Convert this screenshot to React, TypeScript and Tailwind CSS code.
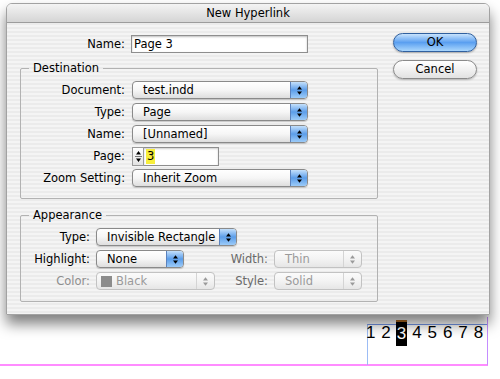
import React from "react";

function Arrows({ color = "#000" }: { color?: string }) {
  return (
    <svg width="7" height="11" viewBox="0 0 7 11">
      <path d="M3.5 1.2 L6 4.4 L1 4.4 Z M3.5 9.8 L6 6.6 L1 6.6 Z" fill={color} />
    </svg>
  );
}

function AquaSelect({ w, text }: { w: string; text: string }) {
  return (
    <div
      className={`flex h-[18px] items-stretch overflow-hidden rounded-[4px] border border-[#8a8a8a] bg-gradient-to-b from-white via-[#f6f6f6] to-[#dedede] shadow-[0_1px_1px_rgba(0,0,0,0.18)] ${w}`}
    >
      <span className="flex-1 truncate pl-[10px] leading-[16px]">{text}</span>
      <span className="flex w-[17px] items-center justify-center border-l border-[#5b82bd] bg-gradient-to-b from-[#c4e0fb] via-[#5b9de9] to-[#9ccbf8]">
        <Arrows />
      </span>
    </div>
  );
}

function DisabledSelect({ w, text, swatch }: { w: string; text: string; swatch?: boolean }) {
  return (
    <div
      className={`flex h-[18px] items-stretch overflow-hidden rounded-[4px] border border-[#c2c2c2] bg-gradient-to-b from-[#fbfbfb] via-[#f3f3f3] to-[#e6e6e6] text-[#9a9a9a] ${w}`}
    >
      <span className="flex flex-1 items-center gap-[4px] truncate pl-[10px] leading-[16px]">
        {swatch && <span className="-ml-[6px] inline-block h-[11px] w-[11px] bg-[#8c8c8c]" />}
        {text}
      </span>
      <span className="flex w-[18px] items-center justify-center border-l border-[#d4d4d4]">
        <Arrows color="#9a9a9a" />
      </span>
    </div>
  );
}

function Label({ w, children, tone = "text-black" }: { w: string; children: React.ReactNode; tone?: string }) {
  return <span className={`shrink-0 text-right leading-[18px] ${w} ${tone}`}>{children}</span>;
}

export default function App() {
  const digits = ["1", "2", "3", "4", "5", "6", "7", "8"];
  return (
    <div className="relative h-[379px] w-[500px] overflow-hidden bg-white font-['DejaVu_Sans',sans-serif] text-[11.5px] text-black">
      {/* document canvas behind the dialog */}
      <div className="absolute left-0 top-[317px] h-[49px] w-[488px] border-b-2 border-r border-b-[#ff8cff] border-r-[#c48cff]" />
      <div className="absolute left-[367px] top-[324px] h-[41px] w-[120px] border-l border-t border-l-[#9cbcf5] border-t-[#7495e6]" />
      <div className="absolute left-[363px] top-[320px] flex font-['Liberation_Sans',sans-serif] text-[17px] leading-[26px] text-black">
        {digits.map((d) => (
          <span key={d} className="flex w-[15.4px] justify-center">
            {d === "3" ? (
              <span className="inline-block w-[11px] border-t-2 border-[#b06a20] bg-black text-center leading-[24px] text-white">
                3
              </span>
            ) : (
              d
            )}
          </span>
        ))}
      </div>

      {/* dialog window */}
      <div className="absolute left-[6px] top-[3px] flex h-[312px] w-[484px] flex-col overflow-hidden rounded-t-[6px] border border-[#a2a2a2] shadow-[0_9px_14px_rgba(0,0,0,0.5)]">
        <div className="flex h-[19px] shrink-0 items-center justify-center border-b border-[#9c9c9c] bg-gradient-to-b from-[#f4f4f4] to-[#d5d5d5] leading-[18px]">
          New Hyperlink
        </div>
        <div className="flex flex-1 bg-[repeating-linear-gradient(180deg,#ebebeb_0px,#ebebeb_2px,#f4f4f4_2px,#f4f4f4_4px)] pl-[13px]">
          {/* left column */}
          <div className="flex w-[358px] flex-col pt-[12px]">
            <div className="flex h-[18px] items-center gap-[6px]">
              <Label w="w-[105px]">Name:</Label>
              <div className="h-[18px] w-[177px] border border-[#8e8e8e] bg-white pl-[2px] leading-[16px] shadow-[inset_0_1px_2px_rgba(0,0,0,0.25)]">
                Page 3
              </div>
            </div>

            <fieldset className="mt-[8px] w-[358px] rounded-[2px] border border-[#b2b2b2] pb-[11px]">
              <legend className="ml-[8px] px-[4px] leading-[14px]">Destination</legend>
              <div className="flex flex-col gap-[4px] pt-[6px]">
                <div className="flex h-[18px] items-center gap-[7px]">
                  <Label w="w-[104px]">Document:</Label>
                  <AquaSelect w="w-[176px]" text="test.indd" />
                </div>
                <div className="flex h-[18px] items-center gap-[7px]">
                  <Label w="w-[104px]">Type:</Label>
                  <AquaSelect w="w-[176px]" text="Page" />
                </div>
                <div className="flex h-[18px] items-center gap-[7px]">
                  <Label w="w-[104px]">Name:</Label>
                  <AquaSelect w="w-[176px]" text="[Unnamed]" />
                </div>
                <div className="flex h-[18px] items-center gap-[7px]">
                  <Label w="w-[104px]">Page:</Label>
                  <div className="flex h-[19px] items-stretch">
                    <div className="flex w-[12px] flex-col items-center justify-center border border-[#9a9a9a] bg-gradient-to-b from-white to-[#e2e2e2]">
                      <svg width="9" height="15" viewBox="0 0 9 15">
                        <path d="M4.5 2 L7 5.5 L2 5.5 Z M4.5 13 L7 9.5 L2 9.5 Z" fill="#000" />
                        <rect x="1" y="7" width="7" height="1" fill="#777" />
                      </svg>
                    </div>
                    <div className="flex w-[75px] items-center border border-l-0 border-[#8e8e8e] bg-white pl-[2px] shadow-[inset_0_1px_2px_rgba(0,0,0,0.2)]">
                      <span className="bg-[#f7ee3c] px-[1px] leading-[15px]">3</span>
                    </div>
                  </div>
                </div>
                <div className="flex h-[18px] items-center gap-[7px]">
                  <Label w="w-[104px]">Zoom Setting:</Label>
                  <AquaSelect w="w-[176px]" text="Inherit Zoom" />
                </div>
              </div>
            </fieldset>

            <fieldset className="mt-[9px] w-[358px] rounded-[2px] border border-[#b2b2b2] pb-[11px]">
              <legend className="ml-[8px] px-[4px] leading-[14px]">Appearance</legend>
              <div className="flex flex-col gap-[4px] pt-[6px]">
                <div className="flex h-[18px] items-center gap-[6px]">
                  <Label w="w-[69px]">Type:</Label>
                  <AquaSelect w="w-[141px]" text="Invisible Rectangle" />
                </div>
                <div className="flex h-[18px] items-center gap-[6px]">
                  <Label w="w-[69px]">Highlight:</Label>
                  <AquaSelect w="w-[88px]" text="None" />
                  <Label w="w-[78px]" tone="text-[#6a6a6a]">Width:</Label>
                  <DisabledSelect w="w-[88px]" text="Thin" />
                </div>
                <div className="flex h-[18px] items-center gap-[6px]">
                  <Label w="w-[69px]" tone="text-[#8e8e8e]">Color:</Label>
                  <DisabledSelect w="w-[119px]" text="Black" swatch />
                  <Label w="w-[47px]" tone="text-[#6a6a6a]">Style:</Label>
                  <DisabledSelect w="w-[88px]" text="Solid" />
                </div>
              </div>
            </fieldset>
          </div>

          {/* right column: buttons */}
          <div className="ml-[15px] flex flex-col gap-[8px] pt-[10px]">
            <div className="flex h-[19px] w-[84px] items-center justify-center rounded-full border border-[#30609f] bg-gradient-to-b from-[#c8e3fc] via-[#5a9ff0] to-[#a9d6fc] leading-[17px] shadow-[0_1px_2px_rgba(0,0,0,0.3)]">
              OK
            </div>
            <div className="flex h-[19px] w-[84px] items-center justify-center rounded-full border border-[#8a8a8a] bg-gradient-to-b from-white via-[#f1f1f1] to-[#e2e2e2] leading-[17px] shadow-[0_1px_2px_rgba(0,0,0,0.25)]">
              Cancel
            </div>
          </div>
        </div>
      </div>
    </div>
  );
}
